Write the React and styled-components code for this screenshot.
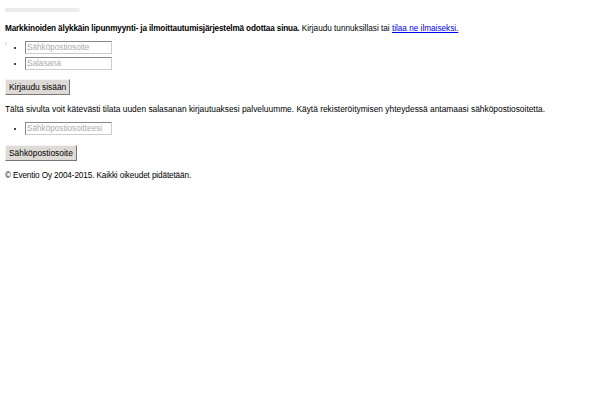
import React from 'react';
import styled, { createGlobalStyle } from 'styled-components';

const Global = createGlobalStyle`
  body {
    margin: 5px;
    background: #fff;
    font-family: "Liberation Sans", Arial, sans-serif;
    font-size: 8.2px;
    color: #000;
  }
`;

const TopBar = styled.div`
  width: 76px;
  height: 4px;
  margin: 3px 0 0 -1px;
  background: #ececec;
  border-radius: 2px;
`;

const Intro = styled.p`
  margin: 11px 0 0 0;
  line-height: 11px;
  strong { font-weight: bold; letter-spacing: -0.15px; }
  a { color: #00e; text-decoration: underline; }
`;

const Form = styled.form`
  margin: 6px 0 0 0;
  position: relative;
`;

const Dot = styled.span`
  position: absolute;
  left: -1px;
  top: 2px;
  width: 3px;
  height: 3px;
  border-radius: 50%;
  background: #e4e4e4;
`;

const Fields = styled.ul`
  margin: 0;
  padding: 0 0 0 20px;
  list-style: disc;
  li { height: 16px; line-height: 16px; }
`;

const Field = styled.input`
  box-sizing: border-box;
  width: 87px;
  height: 13px;
  padding: 0 1px;
  font-family: "Liberation Sans", Arial, sans-serif;
  font-size: 8.2px;
  border: 1px solid #ccc;
  border-top-color: #888;
  border-left-color: #888;
  vertical-align: middle;
  &::placeholder { color: #aaa; }
`;

const Button = styled.button`
  margin-top: ${(p) => p.$top}px;
  height: 16px;
  padding: 0 3px;
  font-family: "Liberation Sans", Arial, sans-serif;
  font-size: 8.4px;
  color: #000;
  background: #dedbd6;
  border: 1px solid;
  border-color: #f4f4f4 #777 #777 #f4f4f4;
  display: block;
`;

const Text = styled.p`
  margin: ${(p) => p.$top}px 0 0 0;
  line-height: 11px;
  font-size: ${(p) => p.$size}px;
  letter-spacing: ${(p) => p.$track || 0}px;
`;

export default function App() {
  return (
    <>
      <Global />
      <TopBar />
      <Intro>
        <strong>Markkinoiden älykkäin lipunmyynti- ja ilmoittautumisjärjestelmä odottaa sinua.</strong>{' '}
        Kirjaudu tunnuksillasi tai <a href="#">tilaa ne ilmaiseksi.</a>
      </Intro>
      <Form onSubmit={(e) => e.preventDefault()}>
        <Dot />
        <Fields>
          <li><Field type="email" placeholder="Sähköpostiosoite" /></li>
          <li><Field type="password" placeholder="Salasana" /></li>
        </Fields>
        <Button $top={7}>Kirjaudu sisään</Button>
      </Form>
      <Text $top={9} $size={8.4}>
        Tältä sivulta voit kätevästi tilata uuden salasanan kirjautuaksesi palveluumme. Käytä rekisteröitymisen yhteydessä antamaasi sähköpostiosoitetta.
      </Text>
      <Form onSubmit={(e) => e.preventDefault()}>
        <Fields>
          <li><Field type="email" placeholder="Sähköpostiosoitteesi" /></li>
        </Fields>
        <Button $top={8}>Sähköpostiosoite</Button>
      </Form>
      <Text $top={9} $size={8.2} $track={-0.12}>© Eventio Oy 2004-2015. Kaikki oikeudet pidätetään.</Text>
    </>
  );
}
